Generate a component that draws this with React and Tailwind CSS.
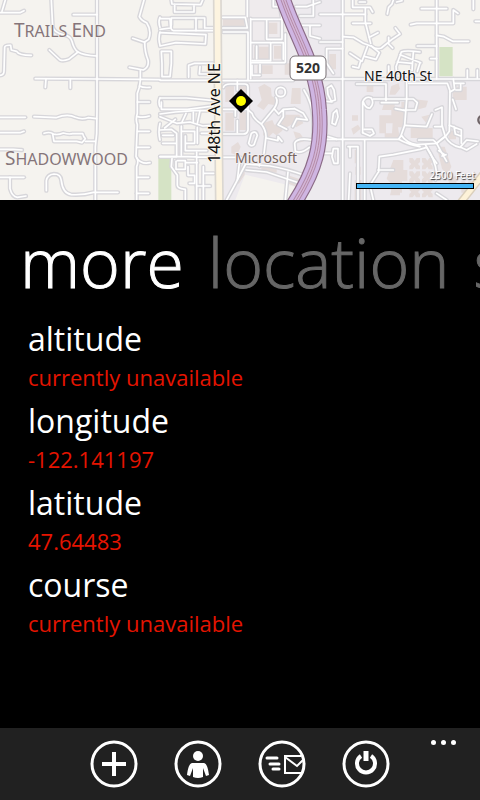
import React from "react";

// Street centre lines, grouped by map tile (each tile is 480 x 600 map units).
const westStreets = [
  "M291 0V330L290 400L286 440V600",
  "M106 236L290 237L420 238L480 239",
  "M0 38H60L72 32",
  "M16 0L6 34",
  "M154 0L158 80Q162 98 190 104Q212 108 216 124Q222 148 234 156Q250 166 290 168",
  "M234 156L206 178Q190 184 180 180L148 150",
  "M220 44H291",
  "M0 226Q12 226 12 214L14 142Q15 135 32 136L34 150L50 154Q56 166 94 166",
  "M138 237L136 262",
  "M211 237V264",
  "M0 352H76",
  "M0 398H60L72 394",
  "M0 448H40L66 450",
  "M102 350L168 353Q204 340 226 352Q246 360 264 353L290 356",
  "M132 400Q150 394 160 402Q174 406 190 399Q206 404 218 401L248 401Q250 410 256 416L246 428Q238 426 230 424H162L158 402",
  "M256 424H286",
  "M0 532H72",
  "M30 532V566Q36 590 52 592L78 588",
  "M139 572V542Q142 524 162 522Q182 522 184 542Q188 580 214 584Q250 586 280 577H354",
  "M432 0L418 50Q424 62 440 68Q456 92 446 118L434 126Q434 156 444 180Q448 202 430 210L388 202",
  "M434 127L398 115",
  "M421 210V240Q420 262 412 280V340Q406 360 412 374L408 470Q418 480 410 500V600",
  "M418 258Q430 264 450 262",
  "M412 306H448",
  "M412 350Q432 354 448 348",
  "M412 394H448",
  "M410 442H448",
  "M410 474Q424 494 450 488",
  "M412 532H446",
  "M410 580H446",
  "M480 52Q474 66 480 82",
  "M480 96Q474 116 480 136",
  "M480 294Q474 306 480 320",
  "M480 370Q474 396 480 420",
];

const centreStreets = [
  "M0 241H168",
  "M188 242H232L400 241",
  "M34 0L36 12L122 14L128 0M44 12V36H102V14",
  "M34 54H108V92H40Q30 90 34 74Z",
  "M108 54H134V84H160M108 92H160",
  "M0 56H30L32 84L0 88",
  "M0 98L138 104L136 132L48 128L0 138",
  "M4 154H34V190L30 230H6V190Z",
  "M86 232V196L104 190H164M120 200L118 222H154",
  "M188 52H256L262 84H188M190 96H264V240M262 0V50",
  "M272 56V236M272 58H366V118H320V62M366 58L360 20H340V0",
  "M272 128H332V182H276M290 138V176M336 128H370V178M272 188H374",
  "M276 196V226H300M300 194V218M376 102V186",
  "M0 294H80L162 302M4 306V328H82L162 318",
  "M0 342L46 336L104 332L160 332M0 350L50 370L90 366L128 378L162 376",
  "M14 384L46 358M78 340L66 366M100 336V366M120 332L112 370",
  "M0 390L34 388L50 400V470H0M8 406H40M8 430H50",
  "M64 378V466M64 394H104V430H76M76 408V452H140M112 382V430M124 400H160",
  "M0 470H84L162 472M110 456L110 600",
  "M36 476L34 500L52 526V556Q52 566 76 568V600",
  "M52 482H76V508H48V484M76 488H112",
  "M84 500V526H104V550H88M130 500V600M130 520H162M110 558H150",
  "M232 242V270M190 262Q194 252 210 252H254Q264 252 264 262V390Q262 402 250 402H190",
  "M190 328H262M226 330V348M232 362V398M264 330L276 340Q280 356 304 372Q318 390 318 410L312 460",
  "M304 372L342 326Q356 306 348 292",
  "M318 414L354 422V410L366 424",
  "M342 326L356 342L370 328L404 326M370 328V350L354 374L380 388M404 326L430 340L442 360L410 356M410 356L398 380",
  "M274 400L266 430Q272 442 282 434L292 406Q288 390 274 400",
  "M188 472H240L260 486L228 548L200 600",
  "M258 492L330 498Q378 506 440 528M258 510L320 516L420 550",
  "M240 474L232 540M300 470L298 498M384 516L376 600",
  "M404 430Q410 412 456 420M404 430L406 454Q424 462 448 442",
  "M408 20H440L480 6M420 48H460V0M424 76H480M450 76V108L480 116",
  "M432 270Q458 310 460 360V460L432 530",
];

const eastStreets = [
  "M68 0V600",
  "M0 43H136",
  "M68 126H0M68 146H20V190L40 220",
  "M0 237H480",
  "M0 418H236",
  "M98 0V22H150L158 36M136 24V66L152 130",
  "M98 70H152M118 6H136",
  "M68 110L100 112L130 130L152 138M174 98L148 112",
  "M90 160L126 184L142 140M122 182L116 204L98 200M136 170L168 178L178 158L154 138",
  "M154 138Q166 150 184 144L216 118L240 102L226 84M206 112V132L218 144",
  "M220 0L216 12L206 22L202 42M230 6L246 2",
  "M350 0V237M304 26H380M272 74L290 70H400V30L414 40",
  "M350 106L372 110L398 124H446M350 138H292M332 176H350",
  "M460 0V28M466 64H480",
  "M228 200L244 156Q256 150 300 156M240 164L302 188M232 186L276 190M280 156L276 212M300 188L292 214M228 200L230 220",
  "M442 210V234M472 210V234M206 198V234",
  "M110 252H198V302M128 398V306Q136 286 154 294Q164 310 150 324Q136 326 130 306",
  "M160 297H280L292 308L286 330H250M184 308H234M226 326L256 332",
  "M260 237V298L254 376L244 404",
  "M266 250H382L390 272L388 394L376 410L350 430",
  "M400 237L404 268L390 276M404 250H432M408 270H422V254M398 298L408 328",
  "M254 376L320 380L336 342M346 330L366 322V380H344M366 376L376 410",
  "M128 398L150 408L162 400L156 388H132",
  "M236 418L244 406Q260 430 290 434L350 430Q360 420 374 410M236 418Q264 434 300 440",
  "M296 420H340L350 430M388 376L424 390V430M402 380L406 402L422 408M376 410Q390 436 420 442L440 420L474 424M422 442L440 450L470 432",
  "M350 430L366 460L380 484M356 452L374 464M366 468L378 464",
  "M134 420V600M84 440H114V600M90 470V440M90 520L86 600",
  "M176 516L178 470L220 464L300 448L320 442Q346 480 350 520L346 540",
  "M174 510H220M174 518L150 556L160 600M316 434Q334 470 350 490",
  "M22 264L34 256L42 270L46 300L34 304L24 284ZM20 304L36 306",
  "M40 340L50 330L54 350L46 374L36 370Z",
  "M24 410L50 418M40 446H54V490H42L36 470ZM0 460H36",
  "M350 580L380 600",
];

const buildings = [
  "M668 56h66v26h-66zM762 140h46v38h-46zM822 138h22v38h-22zM772 196h46v26h-46zM802 68h30v34h-30z",
  "M676 258h26v48h-26zM712 258h26v26h-14v22h-12zM676 338h26v54h-26zM718 336h22v54h-22z",
  "M775 262l18-10 20 12 2 24 16 10-6 18-20-4-14 18-20-12 14-18z",
  "M793 368l24-8 6 14 24-6v24l-18 14-10-8-20 20-10-14zM850 344h48l12 26-22 12-10-10-22 12-20-16zM876 264h26v48h-30zM854 190h26v34h-26z",
  "M694 440l20-14 8 14-10 26-18-6zM714 500h20v24l-18 28-10-14zM784 500h46v18h-46zM860 524l40 14-8 24-34-14zM880 394l20 6 16 22-24 8z",
  "M988 162h20v46h-26v-28h6zM1056 346h18v16h-18zM1054 386l20-12 8 12-22 18zM1064 450h14v40h-14zM1066 500h16v24h-16zM1064 540h20v60h-20z",
  "M1174 258l22-8 4 16-14 18h-18zM1100 256h20v20h-20zM1156 296l-10 34h28v16h-36v54h20v-30h20l-2 30h-22v20h46l-6-38h20v-76h-10v14h-20v-24z",
  "M1232 384h66v30h-66zM1242 298l42 4-6 20-30 8zM1264 350l24-6-10 24zM1358 266h24v34h-24zM1370 260h30v40h-24zM1346 392h22v26h-22z",
  "M1180 480h30v30h12v32h-22v44h-30l8-30-18-20 10-30zM1310 440h24l20 60-12 26-16-20z",
];

const hatch = [
  [1244, 490], [1282, 490], [1244, 530], [1282, 530], [1244, 574], [1282, 574], [1190, 560], [1358, 544], [1400, 560],
];

function StreetSet({ className, width }) {
  const tiles = [westStreets, centreStreets, eastStreets];
  return (
    <g className={className} fill="none" strokeWidth={width} strokeLinecap="round" strokeLinejoin="round">
      {tiles.map((tile, i) => (
        <g key={i} transform={`translate(${i * 480} 0)`}>
          {tile.map((d) => (
            <path key={d} d={d} />
          ))}
        </g>
      ))}
    </g>
  );
}

const highway = "M844 -20C880 100 950 190 958 330C966 430 950 510 876 620";

function MapView() {
  return (
    <svg
      viewBox="0 0 480 200"
      preserveAspectRatio="xMidYMid slice"
      className="block h-[200px] w-full shrink-0 bg-[#f5f3ef]"
      role="img"
      aria-label="Map"
    >
      <g transform="scale(0.333333)">
        <path d="M668 238H760V128H840V0H1026V237H1440V600H668Z" fill="#edeaee" />
        <path d="M744 0H870V240H744Z" fill="#efebed" />
        <path d="M735 524L900 564L880 600H706Z" fill="#f5f3ef" />
        <path d="M475 474H514V600H475ZM1318 141H1358V229H1318Z" fill="#d5e3c5" />
        <g fill="#e5dcda">
          {buildings.map((d) => (
            <path key={d} d={d} />
          ))}
          {hatch.map(([x, y]) => (
            <path key={`${x}-${y}`} d={`M${x - 16} ${y - 16}h10l6 8 6-8h10v12l-6 6 6 6v10h-12l-4-8-6 8h-10v-10l6-6-6-6z`} />
          ))}
        </g>
        <StreetSet className="stroke-[#d7d6da]" width={13} />
        <StreetSet className="stroke-white" width={5} />
        <path d="M652 0L654 240L658 600" fill="none" stroke="#dbd7d1" strokeWidth="27" />
        <path d="M652 0L654 240L658 600" fill="none" stroke="#fdf4e0" strokeWidth="17" />
        <path d="M1380 610L1450 522" stroke="#dbd0bd" strokeWidth="24" />
        <path d="M1380 610L1450 522" stroke="#fdf2d8" strokeWidth="15" />
        <g fill="none">
          <path d={highway} stroke="#8b6b87" strokeWidth="46" />
          <path d={highway} stroke="#cfb5e2" strokeWidth="39" />
          <path d={highway} stroke="#b18aaa" strokeWidth="17" />
          <path d={highway} stroke="#d3b6d8" strokeWidth="11" />
          <path d={highway} stroke="#b58ba6" strokeWidth="3" />
        </g>
        <circle cx="842" cy="276" r="14" fill="#edeaee" stroke="#d7d6da" strokeWidth="13" />
        <circle cx="842" cy="276" r="14" fill="none" stroke="white" strokeWidth="5" />
        <circle cx="1447" cy="360" r="12" fill="none" stroke="#6f6467" strokeWidth="7" />
      </g>
      <g className="fill-[#85757a] font-['Noto_Sans','Open_Sans',sans-serif]" stroke="#f5f3ef" strokeWidth="1" paintOrder="stroke">
        <text x="14" y="37" fontSize="19">T<tspan fontSize="16">RAILS </tspan>E<tspan fontSize="16">ND</tspan></text>
        <text x="5" y="165" fontSize="19">S<tspan fontSize="16">HADOWWOOD</tspan></text>
      </g>
      <g className="font-['Noto_Sans','Open_Sans',sans-serif]" strokeWidth="2" paintOrder="stroke">
        <text x="235" y="163" fontSize="14" fill="#77655f" stroke="#f1eeef">Microsoft</text>
        <text x="364" y="81" fontSize="14" fill="#111111" stroke="#f7f5f4">NE 40th St</text>
        <text transform="translate(220 163) rotate(-90)" fontSize="16" fill="#111111" stroke="#faf5ec">148th Ave NE</text>
      </g>
      <g className="font-['Noto_Sans','Open_Sans',sans-serif]">
        <text
          x="475"
          y="179"
          fontSize="10"
          textAnchor="end"
          fill="#ffffff"
          className="[text-shadow:1px_1px_1px_#333]"
        >
          2500 Feet
        </text>
      </g>
      <rect x="290" y="56" width="36" height="24" rx="5" fill="white" stroke="#766f73" />
      <text x="308" y="73" fontSize="14" fontWeight="700" textAnchor="middle" fill="#333333" className="font-['Noto_Sans','Open_Sans',sans-serif]">520</text>
      <path d="M241 89L253 101L241 113L229 101Z" fill="black" />
      <circle cx="241" cy="101" r="5" fill="#ffff00" />
      <rect x="356.5" y="183.5" width="117" height="5" fill="#45b5f5" stroke="black" />
    </svg>
  );
}

const readings = [
  ["altitude", "currently unavailable"],
  ["longitude", "-122.141197"],
  ["latitude", "47.64483"],
  ["course", "currently unavailable"],
];

function BarButton({ label, children }) {
  return (
    <button type="button" aria-label={label} className="size-12">
      <svg viewBox="0 0 48 48" className="size-12" fill="none" stroke="white">
        <circle cx="24" cy="24" r="22" strokeWidth="3" />
        {children}
      </svg>
    </button>
  );
}

export default function App() {
  return (
    <div className="flex min-h-screen flex-col overflow-hidden bg-black font-['Open_Sans','Noto_Sans',sans-serif] text-white">
      <MapView />
      <nav className="mt-[14px] flex gap-6 overflow-hidden pl-5 text-[68px] leading-[96px] font-light whitespace-nowrap [-webkit-text-stroke:1px_currentColor]">
        <button type="button" aria-current="page">more</button>
        <button type="button" className="text-[#666666]">location</button>
        <button type="button" className="text-[#666666]">s</button>
      </nav>
      <main className="flex-1 px-7 pt-2">
        <dl>
          {readings.map(([name, value]) => (
            <div key={name} className="h-[82px]">
              <dt className="text-[32px] leading-[42px]">{name}</dt>
              <dd className="text-[22px] leading-[34px] text-[#e51400]">{value}</dd>
            </div>
          ))}
        </dl>
      </main>
      <footer className="grid h-[72px] grid-cols-[1fr_auto_1fr] bg-[#212121]">
        <span />
        <div className="flex items-center gap-9">
          <BarButton label="Add">
            <path d="M24 12V36M12 24H36" strokeWidth="4" />
          </BarButton>
          <BarButton label="Person">
            <circle cx="24" cy="16" r="5" fill="white" stroke="none" />
            <path d="M18 23H30C33 24 34 28 35 35L32 36L29 28V37Q24 39 19 37V28L16 36L13 35C14 28 15 24 18 23Z" fill="white" stroke="none" />
          </BarButton>
          <BarButton label="Send">
            <path d="M9 18H19M12 24H21M15 29H21" strokeWidth="3" strokeLinecap="round" />
            <path d="M43 16H27V33H43M27 17L39 26L45 20" strokeWidth="2" />
          </BarButton>
          <BarButton label="Power">
            <path d="M19 16A9 9 0 1 0 29 16" strokeWidth="4" />
            <path d="M24 11V21" strokeWidth="5" />
          </BarButton>
        </div>
        <button type="button" aria-label="More" className="flex items-start gap-[5px] self-start justify-self-end pt-3 pr-6">
          <span className="size-[5px] rounded-full bg-white" />
          <span className="size-[5px] rounded-full bg-white" />
          <span className="size-[5px] rounded-full bg-white" />
        </button>
      </footer>
    </div>
  );
}
